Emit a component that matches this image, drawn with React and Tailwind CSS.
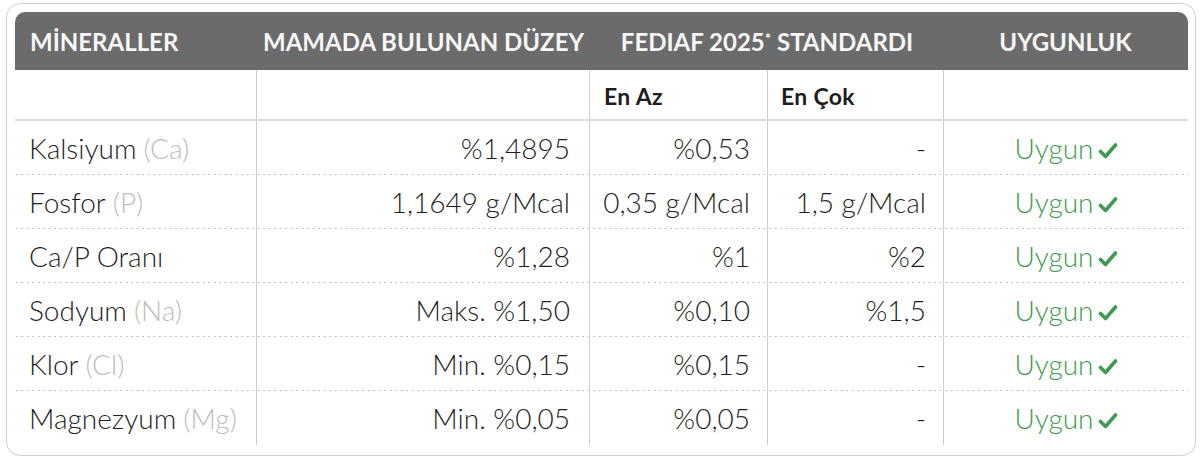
import React from 'react';

const rows = [
    { name: 'Kalsiyum', sym: 'Ca', level: '%1,4895', min: '%0,53', max: '-' },
    { name: 'Fosfor', sym: 'P', level: '1,1649 g/Mcal', min: '0,35 g/Mcal', max: '1,5 g/Mcal' },
    { name: 'Ca/P Oranı', sym: null, level: '%1,28', min: '%1', max: '%2' },
    { name: 'Sodyum', sym: 'Na', level: 'Maks. %1,50', min: '%0,10', max: '%1,5' },
    { name: 'Klor', sym: 'Cl', level: 'Min. %0,15', min: '%0,15', max: '-' },
    { name: 'Magnezyum', sym: 'Mg', level: 'Min. %0,05', min: '%0,05', max: '-' },
];

const CheckMark = () => (
    <svg viewBox="0 0 20 18" className="w-[20px] h-[18px] ml-[5px] mt-[6px]" fill="none">
        <path d="M2.5 9.5 L7.5 14.5 L17.5 3" stroke="#3f9a50" strokeWidth="3.6" strokeLinecap="round" strokeLinejoin="round" />
    </svg>
);

const dotted = 'bg-[linear-gradient(to_right,#bdbdbd_2px,transparent_2px)] bg-[length:5.5px_1px] bg-repeat-x bg-bottom';

const App = () => {
    return (
        <div className="w-[1200px] h-[460px] bg-white pt-[3px] pl-[6px] font-['Lato',sans-serif]">
            <div className="w-[1190px] h-[453px] border border-[#cfcfcf] rounded-[14px] pt-[8px] pl-[8px] pr-[7px] pb-[8px]">
                {/* header */}
                <div className="flex h-[58px] bg-[#6b6b6b] rounded-t-[10px] text-[#f7f7f7] font-bold text-[24px] items-center">
                    <div className="w-[242px] pl-[15px] pt-[2px]">MİNERALLER</div>
                    <div className="w-[333px] text-center pt-[2px]">MAMADA BULUNAN DÜZEY</div>
                    <div className="w-[354px] text-center pt-[2px]">
                        FEDIAF 2025<sup className="text-[15px] -top-[0.45em]">*</sup> STANDARDI
                    </div>
                    <div className="w-[243px] text-center pt-[2px]">UYGUNLUK</div>
                </div>

                {/* sub header */}
                <div className="flex h-[51px] border-b-2 border-[#dcdcdc] text-[#1e1e1e] font-bold text-[23px] tracking-[0.3px]">
                    <div className="w-[242px] border-r border-[#cfcfcf]" />
                    <div className="w-[333px] border-r border-[#cfcfcf]" />
                    <div className="w-[178px] border-r border-[#cfcfcf] pl-[14px] flex items-center pt-[4px]">En Az</div>
                    <div className="w-[176px] border-r border-[#cfcfcf] pl-[13px] flex items-center pt-[4px]">En Çok</div>
                    <div className="w-[243px]" />
                </div>

                {/* rows */}
                {rows.map((r, i) => (
                    <div
                        key={r.name}
                        className={`flex h-[54px] text-[28px] font-light text-[#1f1f1f] ${i < rows.length - 1 ? dotted : ''}`}
                    >
                        <div className="w-[242px] border-r border-[#cfcfcf] pl-[14px] flex items-center">
                            <span>{r.name}</span>
                            {r.sym && <span className="text-[#bdbdbd] ml-[7px]">({r.sym})</span>}
                        </div>
                        <div className="w-[333px] border-r border-[#cfcfcf] pr-[19px] flex items-center justify-end">
                            {r.level}
                        </div>
                        <div className="w-[178px] border-r border-[#cfcfcf] pr-[17px] flex items-center justify-end">
                            {r.min}
                        </div>
                        <div className="w-[176px] border-r border-[#cfcfcf] pr-[17px] flex items-center justify-end">
                            {r.max}
                        </div>
                        <div className="w-[243px] flex items-center justify-center text-[#3f9a50] pl-[2px]">
                            <span>Uygun</span>
                            <CheckMark />
                        </div>
                    </div>
                ))}
            </div>
        </div>
    );
};

export default App;
